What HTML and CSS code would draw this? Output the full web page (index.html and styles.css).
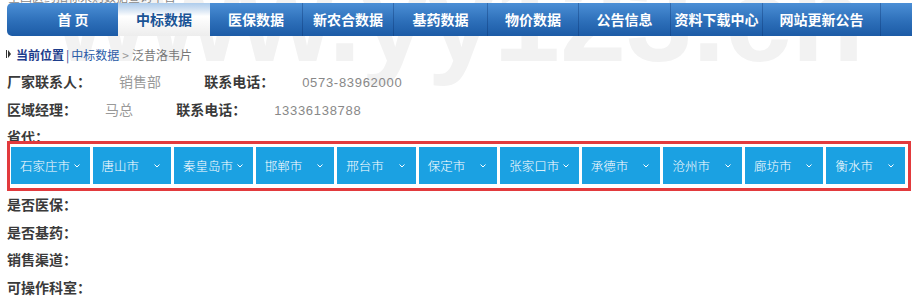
FILE: index.html
```html
<!DOCTYPE html>
<html lang="zh-CN">
<head>
  <meta charset="UTF-8">
  <meta name="viewport" content="width=device-width, initial-scale=1.0">
  <title>中标数据 - 泛昔洛韦片</title>
  <link rel="stylesheet" href="styles.css">
</head>
<body>

<div class="watermark">www.yy123.cn</div>

<div class="site-tip"><span>全国医药招标采购数据查询平台</span></div>

<ul class="nav">
  <li class="home">首 页</li>
  <li class="active">中标数据</li>
  <li class="w92">医保数据</li>
  <li class="w91 sep">新农合数据</li>
  <li class="w94 sep">基药数据</li>
  <li class="w91 sep">物价数据</li>
  <li class="w92 sep">公告信息</li>
  <li class="w92 sep">资料下载中心</li>
  <li class="w118 sep">网站更新公告</li>
  <li class="rest sep"></li>
</ul>

<div class="main">
  <div class="crumb">
    <svg class="crumb-icon" width="5" height="8" viewBox="0 0 5 8"><rect x="0" y="0" width="1" height="8" fill="#333"/><polygon points="2,0 5,4 2,8" fill="#333"/></svg>
    <span class="crumb-here">当前位置</span>
    <span class="crumb-bar">|</span>
    <span class="crumb-link">中标数据</span>
    <span class="crumb-gt">&gt;</span>
    <span class="crumb-name">泛昔洛韦片</span>
  </div>

  <div class="info-row">
    <span class="label">厂家联系人：</span><span class="value">销售部</span>
    <span class="label">联系电话：</span><span class="value num">0573-83962000</span>
  </div>
  <div class="info-row">
    <span class="label">区域经理：</span><span class="value">马总</span>
    <span class="label">联系电话：</span><span class="value num">13336138788</span>
  </div>
  <div class="info-row sheng">
    <span class="label">省代：</span>
  </div>

  <div class="city-box">
    <ul class="city-tabs" id="cityTabs"></ul>
  </div>

  <div class="info-row"><span class="label">是否医保：</span></div>
  <div class="info-row"><span class="label">是否基药：</span></div>
  <div class="info-row"><span class="label">销售渠道：</span></div>
  <div class="info-row"><span class="label">可操作科室：</span></div>
</div>

<script>
  const cities = ["石家庄市", "唐山市", "秦皇岛市", "邯郸市", "邢台市", "保定市", "张家口市", "承德市", "沧州市", "廊坊市", "衡水市"];

  const tabs = document.getElementById("cityTabs");
  cities.forEach(name => {
    const li = document.createElement("li");
    li.innerHTML = `<span>${name}</span>` +
      '<svg class="arrow" width="6" height="4" viewBox="0 0 6 4"><polyline points="0.5,0.5 3,3 5.5,0.5" fill="none" stroke="#fff" stroke-width="1"/></svg>';
    tabs.appendChild(li);
  });
</script>

</body>
</html>
```

FILE: styles.css
```css
body {
  margin: 0;
  background-color: #fff;
  font-family: "Noto Sans CJK SC", "Liberation Sans", sans-serif;
  color: #333;
  overflow: hidden;
}
.watermark {
  position: absolute;
  left: 55px;
  top: -40px;
  z-index: -1;
  font-family: "Liberation Sans", Arial, sans-serif;
  font-weight: bold;
  font-size: 119px;
  line-height: 1;
  color: #f2f2f2;
  white-space: nowrap;
}
.site-tip {
  height: 3px;
  overflow: hidden;
  padding-left: 8px;
}
.site-tip span {
  display: block;
  margin-top: -9px;
  font-size: 12px;
  line-height: 12px;
  color: #888;
}
.nav {
  list-style: none;
  margin: 0 0 0 7px;
  padding: 0;
  display: flex;
  height: 33px;
  border-radius: 5px 0 0 5px;
  background: linear-gradient(to bottom, #4b8fd6, #2d6fb9 55%, #1c5ba6);
}
.nav li {
  box-sizing: border-box;
  width: 92px;
  line-height: 33px;
  text-align: center;
  color: #fff;
  font-weight: bold;
  font-size: 14px;
  white-space: nowrap;
}
.nav .home {
  width: 111px;
  padding-left: 21px;
}
.nav .active {
  color: #1a5496;
  background: linear-gradient(to bottom, rgba(255, 255, 255, 0.55), #fff 40%, #ededed);
}
.nav .sep {
  border-left: 1px solid rgba(10, 45, 105, 0.35);
}
.nav .w91 { width: 91px; }
.nav .w94 { width: 94px; }
.nav .w118 { width: 118px; }
.nav .rest { flex: 1; }

.main {
  padding-left: 7px;
}
.crumb {
  margin-top: 4px;
  height: 28px;
  display: flex;
  align-items: center;
  font-size: 12px;
  color: #777;
}
.crumb-icon {
  margin: 0 5px 0 -1px;
}
.crumb-here {
  color: #1d3d8c;
  font-weight: bold;
}
.crumb-bar {
  margin: 0 2px;
  color: #1d3d8c;
}
.crumb-link {
  color: #2b5ca8;
}
.crumb-gt {
  margin: 0 3px;
  color: #999;
}
.info-row {
  height: 27.5px;
  line-height: 27.5px;
  font-size: 14px;
  white-space: nowrap;
}
.info-row .label {
  font-weight: bold;
  color: #3a3a3a;
}
.info-row .value {
  display: inline-block;
  margin: 0 40px 0 28px;
  color: #999;
}
.info-row .num {
  font-family: "Liberation Sans", Arial, sans-serif;
  font-size: 13px;
  letter-spacing: 0.7px;
  color: #888;
}
.sheng {
  height: 18px;
}
.city-box {
  position: relative;
  box-sizing: border-box;
  width: 904px;
  border: 3px solid #e23a3d;
  background: #fff;
  padding: 3px 3px 4px 1px;
}
.city-tabs {
  list-style: none;
  margin: 0;
  padding: 0;
  display: flex;
  gap: 3px;
  background: #fff;
}
.city-tabs li {
  flex: 1;
  min-width: 0;
  height: 37px;
  display: flex;
  align-items: center;
  justify-content: space-between;
  padding: 0 11px 0 9px;
  background-color: #1ba1e2;
  color: #fff;
  font-size: 12.5px;
  font-weight: 300;
  white-space: nowrap;
}
.city-tabs .arrow {
  flex-shrink: 0;
  margin-left: 4px;
}
```
